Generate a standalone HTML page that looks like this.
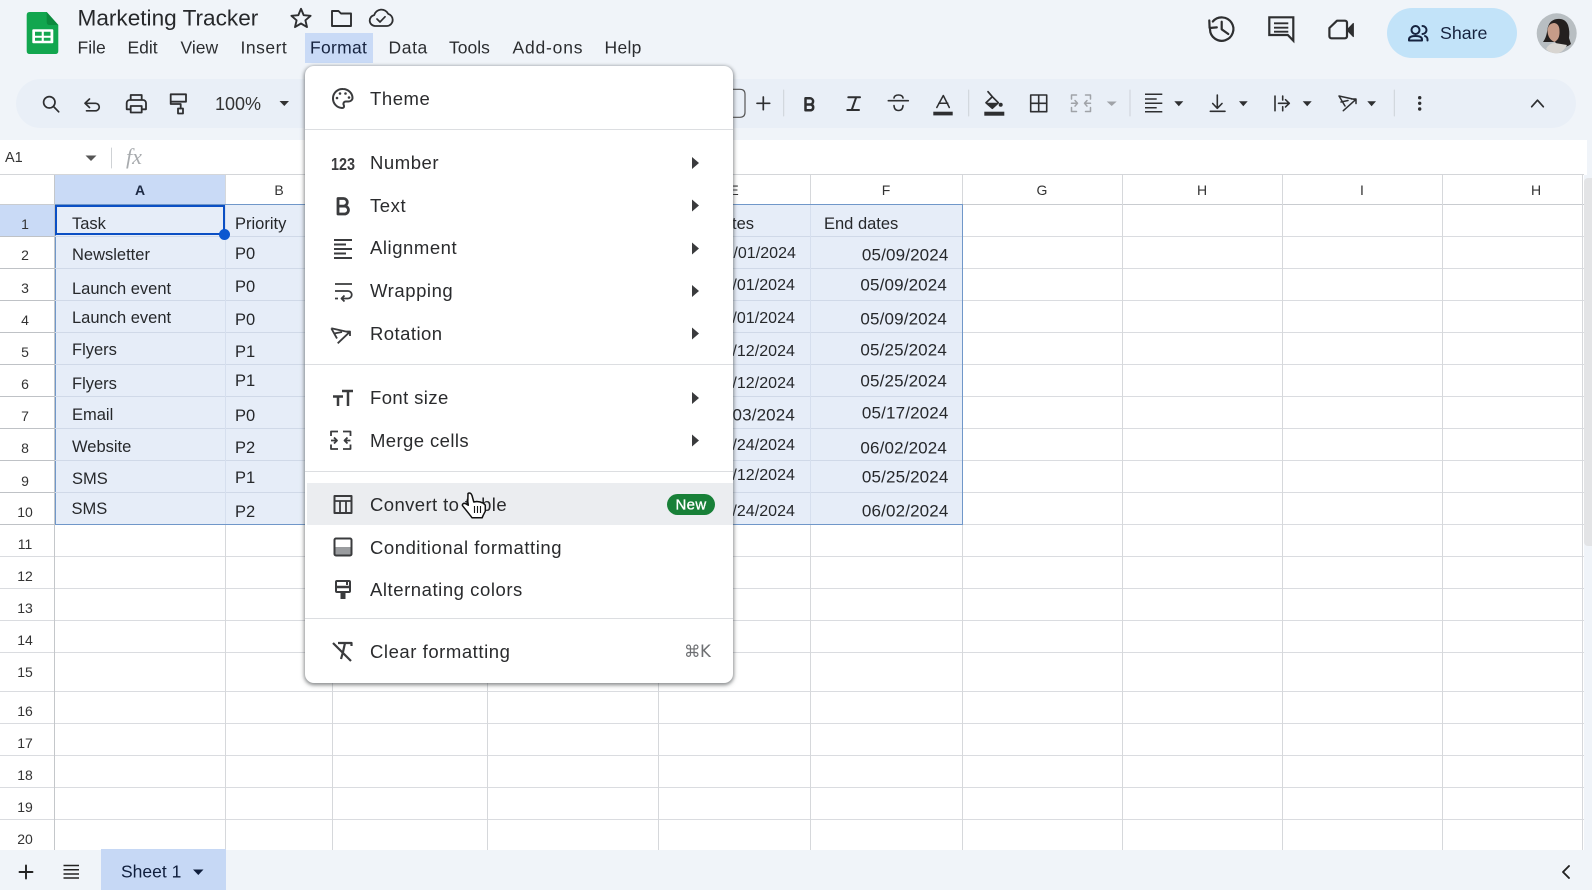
<!DOCTYPE html>
<html><head><meta charset="utf-8"><title>Marketing Tracker</title>
<style>
html,body{margin:0;padding:0;width:1592px;height:890px;overflow:hidden;background:#f0f4f9}
body{position:relative;font-family:"Liberation Sans",sans-serif;color:#1f1f1f}
.a{position:absolute}
.t{position:absolute;white-space:nowrap;transform:translateY(-50%);line-height:1}
.c{font-size:16.5px;color:#26282b}
.d{font-size:17px;color:#26282b;letter-spacing:.15px}
.e{font-size:16px;color:#26282b;letter-spacing:.05px}
.r{transform:translate(-100%,-50%)}
.m{font-size:18.5px;letter-spacing:.55px;color:#2a2b2d;left:370px}
.bar{font-size:17.5px;color:#2b2d30}
.rh{font-size:14px;color:#333;transform:translate(-50%,-50%);left:25px}
.ch{font-size:14px;color:#333;transform:translate(-50%,-50%);top:190px}
.h{position:absolute;left:0;width:1584px;height:1px;background:#dadce0}
.v{position:absolute;top:175px;width:1px;height:675px;background:#d6d8db}
.hs{position:absolute;left:55px;width:907px;height:1px;background:#d0d9e8}
.vs{position:absolute;top:205px;width:1px;height:319px;background:#d6dfee}
.rl{position:absolute;left:0;width:55px;height:1px;background:#bfc2c6}
.div{position:absolute;left:0;width:428px;height:1px;background:#dcdee1}
svg{position:absolute;left:0;top:0;overflow:visible}
</style></head><body>

<!-- toolbar pill -->
<div class="a" style="left:16px;top:79px;width:1560px;height:49px;border-radius:25px;background:#e9eff7"></div>
<!-- format highlight -->
<div class="a" style="left:305px;top:33px;width:68px;height:30px;background:#c9daf6"></div>
<!-- share -->
<div class="a" style="left:1387px;top:8px;width:130px;height:50px;border-radius:25px;background:#c2e3f9"></div>
<!-- formula bar + sheet -->
<div class="a" style="left:0;top:140px;width:1587px;height:35px;background:#fff"></div>
<div class="a" style="left:0;top:174px;width:1584px;height:676px;background:#fff"></div>

<div class="t" style="left:77.500px;top:19px;font-size:22.600px;color:#26282b">Marketing Tracker</div>
<div class="t bar" style="left:77.500px;top:48px">File</div>
<div class="t bar" style="left:127.500px;top:48px">Edit</div>
<div class="t bar" style="left:180.500px;top:48px">View</div>
<div class="t bar" style="left:240.500px;top:48px;letter-spacing:.5px">Insert</div>
<div class="t bar" style="left:310px;top:48px;color:#16233f;letter-spacing:.3px">Format</div>
<div class="t bar" style="left:388.500px;top:48px;letter-spacing:.6px">Data</div>
<div class="t bar" style="left:449px;top:48px">Tools</div>
<div class="t bar" style="left:512.500px;top:48px;letter-spacing:.8px">Add-ons</div>
<div class="t bar" style="left:604.500px;top:48px;letter-spacing:.3px">Help</div>
<div class="t" style="left:1440px;top:33.500px;font-size:17.800px;color:#16233f">Share</div>
<div class="t" style="left:215px;top:103.500px;font-size:18px;color:#333">100%</div>
<div class="t" style="left:5px;top:158px;font-size:14.500px;color:#333">A1</div>
<div class="t" style="left:126px;top:157px;font-family:'Liberation Serif',serif;font-style:italic;font-size:22px;color:#a8abae">fx</div>

<!-- grid lines -->
<div class="h" style="top:174px;background:#d4d6d9"></div>
<div class="h" style="top:204px;background:#c9ccd0"></div>
<div class="h" style="top:236px"></div><div class="h" style="top:268px"></div><div class="h" style="top:300px"></div><div class="h" style="top:332px"></div><div class="h" style="top:364px"></div><div class="h" style="top:396px"></div><div class="h" style="top:428px"></div><div class="h" style="top:460px"></div><div class="h" style="top:492px"></div><div class="h" style="top:524px"></div><div class="h" style="top:556px"></div><div class="h" style="top:588px"></div><div class="h" style="top:620px"></div><div class="h" style="top:652px"></div><div class="h" style="top:691px"></div><div class="h" style="top:723px"></div><div class="h" style="top:755px"></div><div class="h" style="top:787px"></div><div class="h" style="top:819px"></div>
<div class="v" style="left:54px;background:#c4c7ca"></div><div class="v" style="left:225px"></div><div class="v" style="left:332px"></div><div class="v" style="left:487px"></div><div class="v" style="left:658px"></div><div class="v" style="left:810px"></div><div class="v" style="left:962px"></div><div class="v" style="left:1122px"></div><div class="v" style="left:1282px"></div><div class="v" style="left:1442px"></div><div class="v" style="left:1582px"></div>

<!-- header highlights -->
<div class="a" style="left:55px;top:175px;width:170px;height:29px;background:#c9daf6"></div>
<div class="a" style="left:0;top:205px;width:54px;height:31px;background:#c9daf6"></div>
<div class="rl" style="top:236px"></div><div class="rl" style="top:268px"></div><div class="rl" style="top:300px"></div><div class="rl" style="top:332px"></div><div class="rl" style="top:364px"></div><div class="rl" style="top:396px"></div><div class="rl" style="top:428px"></div><div class="rl" style="top:460px"></div><div class="rl" style="top:492px"></div><div class="rl" style="top:524px"></div>

<!-- selection -->
<div class="a" style="left:55px;top:204px;width:906px;height:319px;background:#e6edf8;border:1px solid #7097c9"></div>
<div class="hs" style="top:236px"></div><div class="hs" style="top:268px"></div><div class="hs" style="top:300px"></div><div class="hs" style="top:332px"></div><div class="hs" style="top:364px"></div><div class="hs" style="top:396px"></div><div class="hs" style="top:428px"></div><div class="hs" style="top:460px"></div><div class="hs" style="top:492px"></div>
<div class="vs" style="left:225px"></div><div class="vs" style="left:332px"></div><div class="vs" style="left:487px"></div><div class="vs" style="left:658px"></div><div class="vs" style="left:810px"></div>
<div class="a" style="left:55px;top:205px;width:166px;height:26px;border:2px solid #0b4fc4;background:transparent"></div>
<div class="a" style="left:219px;top:229px;width:11px;height:11px;border-radius:50%;background:#0b57d0"></div>

<!-- col headers -->
<div class="t ch" style="left:140px;font-weight:bold;color:#1d2a44">A</div>
<div class="t ch" style="left:279px">B</div>
<div class="t ch" style="left:734px">E</div>
<div class="t ch" style="left:886px">F</div>
<div class="t ch" style="left:1042px">G</div>
<div class="t ch" style="left:1202px">H</div>
<div class="t ch" style="left:1362px">I</div>
<div class="t ch" style="left:1536px">H</div>

<!-- row headers -->
<div class="t rh" style="top:224px">1</div><div class="t rh" style="top:255px">2</div><div class="t rh" style="top:288px">3</div><div class="t rh" style="top:320px">4</div><div class="t rh" style="top:352px">5</div><div class="t rh" style="top:384px">6</div><div class="t rh" style="top:416px">7</div><div class="t rh" style="top:448px">8</div><div class="t rh" style="top:481px">9</div><div class="t rh" style="top:512px">10</div><div class="t rh" style="top:544px">11</div><div class="t rh" style="top:576px">12</div><div class="t rh" style="top:608px">13</div><div class="t rh" style="top:640px">14</div><div class="t rh" style="top:672px">15</div><div class="t rh" style="top:711px">16</div><div class="t rh" style="top:743px">17</div><div class="t rh" style="top:775px">18</div><div class="t rh" style="top:807px">19</div><div class="t rh" style="top:839px">20</div>

<!-- col A -->
<div class="t c" style="left:72px;top:224px">Task</div>
<div class="t c" style="left:72px;top:255px">Newsletter</div>
<div class="t c" style="left:72px;top:289px">Launch event</div>
<div class="t c" style="left:72px;top:318px">Launch event</div>
<div class="t c" style="left:72px;top:350px">Flyers</div>
<div class="t c" style="left:72px;top:384px">Flyers</div>
<div class="t c" style="left:72px;top:415px">Email</div>
<div class="t c" style="left:72px;top:447px">Website</div>
<div class="t c" style="left:72px;top:479px">SMS</div>
<div class="t c" style="left:71.500px;top:509px">SMS</div>
<!-- col B -->
<div class="t c" style="left:235px;top:224px">Priority</div>
<div class="t c" style="left:235px;top:254px">P0</div>
<div class="t c" style="left:235px;top:287px">P0</div>
<div class="t c" style="left:235px;top:320px">P0</div>
<div class="t c" style="left:235px;top:352px">P1</div>
<div class="t c" style="left:235px;top:381px">P1</div>
<div class="t c" style="left:235px;top:416px">P0</div>
<div class="t c" style="left:235px;top:448px">P2</div>
<div class="t c" style="left:235px;top:478px">P1</div>
<div class="t c" style="left:235px;top:512px">P2</div>
<!-- col E -->
<div class="t c r" style="left:754px;top:224px">Start dates</div>
<div class="t e r" style="left:796px;top:254px">05/01/2024</div>
<div class="t e r" style="left:795px;top:286px">05/01/2024</div>
<div class="t e r" style="left:795px;top:319px">05/01/2024</div>
<div class="t e r" style="left:795px;top:352px">05/12/2024</div>
<div class="t e r" style="left:795px;top:384px">05/12/2024</div>
<div class="t d r" style="left:795px;top:414.500px">05/03/2024</div>
<div class="t e r" style="left:795px;top:446px">05/24/2024</div>
<div class="t e r" style="left:795px;top:476px">05/12/2024</div>
<div class="t e r" style="left:795px;top:512px">05/24/2024</div>
<!-- col F -->
<div class="t c" style="left:824px;top:224px">End dates</div>
<div class="t d r" style="left:948.500px;top:254.500px">05/09/2024</div>
<div class="t d r" style="left:947px;top:284.500px">05/09/2024</div>
<div class="t d r" style="left:947px;top:318.500px">05/09/2024</div>
<div class="t d r" style="left:947px;top:349.500px">05/25/2024</div>
<div class="t d r" style="left:947px;top:380.500px">05/25/2024</div>
<div class="t d r" style="left:948.500px;top:412.500px">05/17/2024</div>
<div class="t d r" style="left:947px;top:447.500px">06/02/2024</div>
<div class="t d r" style="left:948.500px;top:476.500px">05/25/2024</div>
<div class="t d r" style="left:948.500px;top:510.500px">06/02/2024</div>

<!-- scrollbar + bottom -->
<div class="a" style="left:1584px;top:178px;width:8px;height:368px;background:#e3e4e6;border-radius:4px 0 0 4px"></div>
<div class="a" style="left:0;top:850px;width:1592px;height:40px;background:#f0f4f9"></div>
<div class="a" style="left:101px;top:849px;width:125px;height:41px;background:#c6d8f5"></div>
<div class="t" style="left:121px;top:872px;font-size:17.500px;color:#0f1e3c">Sheet 1</div>

<!-- page icons -->
<svg width="1592" height="890" fill="none" stroke="#2e2f31" stroke-width="1.700" stroke-linecap="round" stroke-linejoin="round">
 <!-- logo -->
 <path d="M26.700 15q0-3 3-3h17l11.600 13v26q0 3-3 3H29.700q-3 0-3-3z" fill="#12a64f" stroke="none"/>
 <path d="M46.700 12v10q0 3 3 3h8.600z" fill="#0c8a3e" stroke="none"/>
 <rect x="32.300" y="29.300" width="21" height="14" rx="1" fill="#fff" stroke="none"/>
 <path d="M35 31.700h6.700v4H35zM43.800 31.700h6.700v4h-6.700zM35 37.700h6.700v3H35zM43.800 37.700h6.700v3h-6.700z" fill="#12a64f" stroke="none"/>
 <!-- star folder cloud -->
 <path d="M301 8.800l2.700 6.400 6.900.6-5.200 4.500 1.600 6.800-6-3.600-6 3.600 1.600-6.800-5.200-4.500 6.900-.6z" stroke-width="1.900"/>
 <path d="M332 11h6.500l2.500 2.500H351V26H332z" stroke-width="1.900"/>
 <path d="M376 26h-1a5.500 5.500 0 0 1-.800-10.900 7.500 7.500 0 0 1 14-1.200 6.200 6.200 0 0 1 4.500 6 6.100 6.100 0 0 1-6.100 6.100z" stroke-width="1.800"/>
 <path d="M377 19l3 3 5-5.200" stroke-width="1.700"/>
 <!-- top right -->
 <path d="M1212.800 21.500A11.700 11.700 0 1 1 1210 29.300" stroke-width="2.200"/>
 <path d="M1209.300 20.500l.3 7.500 7.200-.6M1221.700 21.700v7.600l6.600 4.700" stroke-width="2.200"/>
 <path d="M1269.300 17.300h24v23.400l-5.500-5.700h-18.500z" stroke-width="2.200" stroke-linecap="butt" stroke-linejoin="miter"/>
 <path d="M1274 23.300h14.300M1274 27.700h14.300M1274 31.700h14.300" stroke-width="1.800" stroke-linecap="butt"/>
 <path d="M1337 20.700h8a2 2 0 0 1 2 2v13.600a2 2 0 0 1-2 2h-13.600a2 2 0 0 1-2-2V28z" stroke-width="2.200"/>
 <path d="M1347 30l6.300-6.500v13z" fill="#2e2f31" stroke-width="1.200"/>
 <!-- share icon -->
 <g stroke="#16233f" stroke-width="2">
  <circle cx="1415.500" cy="30" r="4"/><path d="M1422.500 26a4 4 0 0 1 0 8"/><path d="M1409 40.500v-1q0-3.500 6.500-3.500t6.500 3.500v1z"/><path d="M1425 36q2.500 1 2.500 3.500v1"/>
 </g>
 <!-- avatar -->
 <circle cx="1556.700" cy="33.300" r="20" fill="#b8bec2" stroke="none"/>
 <path d="M1543 42q3-4 4-10 1-12 10-13 8-1 11 6 2 6 1 13l2 6q-5 4-11 3l-5-5z" fill="#24201f" stroke="none"/>
 <path d="M1547.500 30q1-7 7-7 5 1 5 8 .5 8-5 11-7-3-7-12z" fill="#c69c88" stroke="none"/>
 <path d="M1546 49q3-6 9-6l12 2q-3 6-8 8-8 1.500-13-4z" fill="#d8d5d1" stroke="none"/>
 <!-- toolbar left -->
 <circle cx="49.300" cy="102.300" r="5.700"/><path d="M53.500 106.500l5.200 5.300"/>
 <path d="M89.500 99L85 103.300l4.500 4.200M85 103.300h10.500a3.700 3.700 0 0 1 0 7.500h-9"/>
 <path d="M130.700 100v-5h11v5M130.700 109.300h-4V103a3 3 0 0 1 3-3h13.300a3 3 0 0 1 3 3v6.300h-4" stroke-width="1.800"/>
 <rect x="130.700" y="106" width="11" height="6.500" stroke-width="1.800"/>
 <path d="M170.700 94.300H186v7.400h-15.300zM170.700 101.700v2.300h10v4.500" stroke-width="1.800"/><rect x="178" y="108.500" width="5" height="5" stroke-width="1.800"/>
 <path d="M279.500 101h9.500l-4.700 5z" fill="#333" stroke="none"/>
 <!-- toolbar right of menu -->
 <path d="M733 89.300h7q5 0 5 5v18q0 5-5 5h-7" stroke="#555" stroke-width="1.200"/>
 <path d="M763.300 97v12.700M757 103.300h12.700"/>
 <path d="M783.700 90v26M968.700 90v26M1130 90v26M1394.300 90v26" stroke="#cdd2d8" stroke-width="1"/>
 <path d="M805.500 98.300h4.500a3.100 3.100 0 0 1 0 6.200h-4.500zM805.500 104.500h5.500a3 3 0 0 1 0 5.800h-5.500z" stroke-width="2.500"/>
 <path d="M848.300 97.300H860M847.300 110H859M856.200 97.300L851.700 110" stroke-width="2"/>
 <path d="M888.300 100.700h20M894 98q.5-3 4.500-3t4.500 3M894 105.500q.3 5 4.500 5t4.500-5" stroke-width="1.600"/>
 <path d="M936.800 107.500l6.500-12 6 12M938.800 103.300h9" stroke-width="1.500"/>
 <rect x="933.300" y="111.700" width="19.400" height="3.700" fill="#2e2f31" stroke="none"/>
 <path d="M988 91.700l4.300 5M992.300 96.700l6 6-6 5.500-6.300-5.500z" stroke-width="1.700"/>
 <path d="M986 102.700h12.300l-6 5.500z" fill="#2e2f31" stroke="none"/>
 <circle cx="1000.700" cy="104.800" r="2" fill="#2e2f31" stroke="none"/>
 <rect x="984.300" y="111.700" width="20" height="4" fill="#2e2f31" stroke="none"/>
 <path d="M1030.700 95h16v16.700h-16zM1038.700 95v16.700M1030.700 103.300h16" stroke-width="1.600"/>
 <path d="M1071.500 99v-4h5M1085.500 95h5v4M1071.500 107.500v4h5M1085.500 111.500h5v-4M1071.500 103.300h6M1090.500 103.300h-6M1075 100.500l2.500 2.800-2.500 2.800M1087 100.500l-2.500 2.800 2.500 2.800" stroke="#a0a3a8" stroke-width="1.500"/>
 <path d="M1106.700 101.500h10l-5 4.500z" fill="#a0a3a8" stroke="none"/>
 <path d="M1145 94.300h17.300M1145 99h11.700M1145 103.300h17.300M1145 107.700h11.700M1145 111.700h17.300" stroke-width="1.500" stroke-linecap="butt"/>
 <path d="M1174.300 101.300h9l-4.500 5z" fill="#2e2f31" stroke="none"/>
 <path d="M1217.300 95v13.300M1212.700 103.500l4.600 4.800 4.700-4.800M1210.300 111.300H1225" stroke-width="1.600"/>
 <path d="M1239 101.300h8.700l-4.400 5z" fill="#2e2f31" stroke="none"/>
 <path d="M1275 96v14.700M1282.700 96v4M1282.700 106.700v4M1278.500 103.300h10.800M1285.500 99.700l3.800 3.600-3.800 3.600" stroke-width="1.600"/>
 <path d="M1302.700 101.300h9l-4.500 5z" fill="#2e2f31" stroke="none"/>
 <path d="M1339 96l16 3.500M1339 96l6 10M1341 102l7-1.500M1343.300 110.700l12.700-11.400M1351.500 99h4.500v4.500" stroke-width="1.500"/>
 <path d="M1367.300 101.300h8.700l-4.400 5z" fill="#2e2f31" stroke="none"/>
 <circle cx="1419.700" cy="97.700" r="1.700" fill="#2e2f31" stroke="none"/><circle cx="1419.700" cy="103.300" r="1.700" fill="#2e2f31" stroke="none"/><circle cx="1419.700" cy="109" r="1.700" fill="#2e2f31" stroke="none"/>
 <path d="M1531.700 106.700l5.800-6.500 5.800 6.500"/>
 <!-- name box -->
 <path d="M85.500 155.500h11l-5.500 5.500z" fill="#555" stroke="none"/>
 <path d="M111.500 148v20" stroke="#cfd2d5" stroke-width="1"/>
 <!-- bottom -->
 <path d="M26 865.500v13M19.500 872h13" stroke="#222" stroke-width="1.900"/>
 <path d="M63.500 865.500H79M63.500 869.800H79M63.500 874H79M63.500 878H79" stroke="#222" stroke-width="1.500" stroke-linecap="butt"/>
 <path d="M193 869.500h10.500l-5.200 5.500z" fill="#0f1e3c" stroke="none"/>
 <path d="M1569 866l-6 6 6 6" stroke="#222" stroke-width="1.900"/>
</svg>

<!-- menu -->
<div class="a" style="left:305px;top:66px;width:428px;height:617px;background:#fff;border-radius:9px;box-shadow:0 1px 3px 1px rgba(60,64,67,.45),0 2px 6px rgba(60,64,67,.25)"></div>
<div class="a" style="left:305px;top:66px;width:428px;height:617px">
 <div class="div" style="top:63px"></div>
 <div class="div" style="top:298px"></div>
 <div class="div" style="top:405px"></div>
 <div class="a" style="left:2px;top:417px;width:426px;height:42px;background:#ebedf0"></div>
 <div class="div" style="top:552px"></div>
</div>
<div class="t m" style="top:99px">Theme</div>
<div class="t m" style="top:163px">Number</div>
<div class="t m" style="top:205.500px">Text</div>
<div class="t m" style="top:248px">Alignment</div>
<div class="t m" style="top:291px">Wrapping</div>
<div class="t m" style="top:334px;letter-spacing:.45px">Rotation</div>
<div class="t m" style="top:398px;letter-spacing:.4px">Font size</div>
<div class="t m" style="top:441px;letter-spacing:.4px">Merge cells</div>
<div class="t m" style="top:505px;letter-spacing:.4px">Convert to table</div>
<div class="t m" style="top:548px">Conditional formatting</div>
<div class="t m" style="top:590px">Alternating colors</div>
<div class="t m" style="top:652px">Clear formatting</div>
<div class="a" style="left:667px;top:494px;width:48px;height:21px;border-radius:11px;background:#188038"></div>
<div class="t" style="left:691px;top:505px;transform:translate(-50%,-50%);font-size:15px;color:#fff;letter-spacing:.3px;-webkit-text-stroke:.3px #fff">New</div>
<div class="t" style="left:684px;top:652px;font-family:'DejaVu Sans','Liberation Sans',sans-serif;font-size:16.500px;color:#6d6f72;letter-spacing:-.5px">⌘K</div>

<svg width="1592" height="890" fill="none" stroke="#3a3b3d" stroke-width="2" stroke-linejoin="round">
 <!-- palette -->
 <path d="M343 89a9.500 9.500 0 1 0-1 19c2 0 2.500-1.500 1.800-2.800-1-2 .2-3.700 2.200-3.700h2.500c2 0 4-1.500 4-3.500 0-5-4.500-9-9.500-9z"/>
 <circle cx="337" cy="98" r="1.300" fill="#3a3b3d" stroke="none"/><circle cx="340" cy="93.500" r="1.300" fill="#3a3b3d" stroke="none"/><circle cx="345.500" cy="93.500" r="1.300" fill="#3a3b3d" stroke="none"/><circle cx="349" cy="97.500" r="1.300" fill="#3a3b3d" stroke="none"/>
 <!-- 123 -->
 <text x="331" y="170" font-family="Liberation Sans" font-weight="bold" font-size="17.500" fill="#3a3b3d" stroke="none" textLength="24" lengthAdjust="spacingAndGlyphs">123</text>
 <!-- B -->
 <path d="M338 198.500h5.500a3.800 3.800 0 0 1 0 7.600H338zM338 206.100h6.500a3.800 3.800 0 0 1 0 7.900H338z" stroke-width="2.800"/>
 <!-- align -->
 <path d="M334 240h18M334 244.500h12M334 249h18M334 253.500h12M334 258h18" stroke-width="2" stroke-linecap="butt"/>
 <!-- wrap -->
 <path d="M335 284h17M335 291h13a3.500 3.500 0 0 1 0 7.500h-6M344.500 295.500l-3 3 3 3M335 298.500h3" stroke-width="1.800"/>
 <!-- rotation -->
 <path d="M331.300 328.300L348 332M331.300 328.300l5.700 10.200M334 333.500l8-1.500M337.700 343.300L350 331.700M345.500 331.500h4.500v4.500" stroke-width="1.800"/>
 <!-- font size -->
 <path d="M333 396.500h10M338 396.500V406" stroke-width="2.500"/><path d="M342 391h11M348 391v15" stroke-width="2.500"/>
 <!-- merge -->
 <path d="M331 436v-4.500h7M343 431.500h7.500v4.500M331 444.500v4.500h7M343 449h7.500v-4.500M331 440.500h6M350.500 440.500h-6M334 437.500l3 3-3 3M347.500 437.500l-3 3 3 3" stroke-width="1.800"/>
 <!-- table -->
 <rect x="334.500" y="496" width="17" height="17" stroke-width="2"/><path d="M334.500 501h17M340 501v12M346 501v12" stroke-width="1.800"/>
 <!-- conditional -->
 <rect x="335.500" y="547" width="15" height="8" fill="#9a9c9f" stroke="none"/>
 <rect x="334.500" y="538.500" width="17" height="17" rx="1.500" stroke-width="2"/>
 <!-- alternating -->
 <rect x="336" y="581" width="14" height="11" rx="1" stroke-width="2"/><path d="M336 587h14" stroke-width="2.500"/><path d="M347 582v3"/><rect x="340.500" y="592" width="5" height="7" fill="#3a3b3d" stroke="none"/>
 <!-- clear -->
 <path d="M333 643l18 18M338 643h13.500v3M345 643l-2 9-2 7" stroke-width="2.200"/>
 <!-- arrows -->
 <g fill="#3a3b3d" stroke="none">
  <path d="M692 157l7 6-7 6zM692 199.500l7 6-7 6zM692 242.500l7 6-7 6zM692 285l7 6-7 6zM692 327.500l7 6-7 6zM692 392l7 6-7 6zM692 434.500l7 6-7 6z"/>
 </g>
 <!-- hand cursor -->
 <path d="M468 493.500c1.700-1.200 3.400 0 4 2l1.800 6.500 3-.5 3.500.5 3 1.200 2 2v6l-2.300 4.500-.8 2h-10.200l-3.500-4.500-6-7.500c-.6-1.700 1.200-2.800 2.800-2.200l3 1.700-.5-3.700z" fill="#fff" stroke="#111" stroke-width="1.500"/>
 <path d="M474.500 506v7M477.500 506v7M480.500 506v7" stroke="#111" stroke-width="1.100"/>
</svg>
</body></html>
